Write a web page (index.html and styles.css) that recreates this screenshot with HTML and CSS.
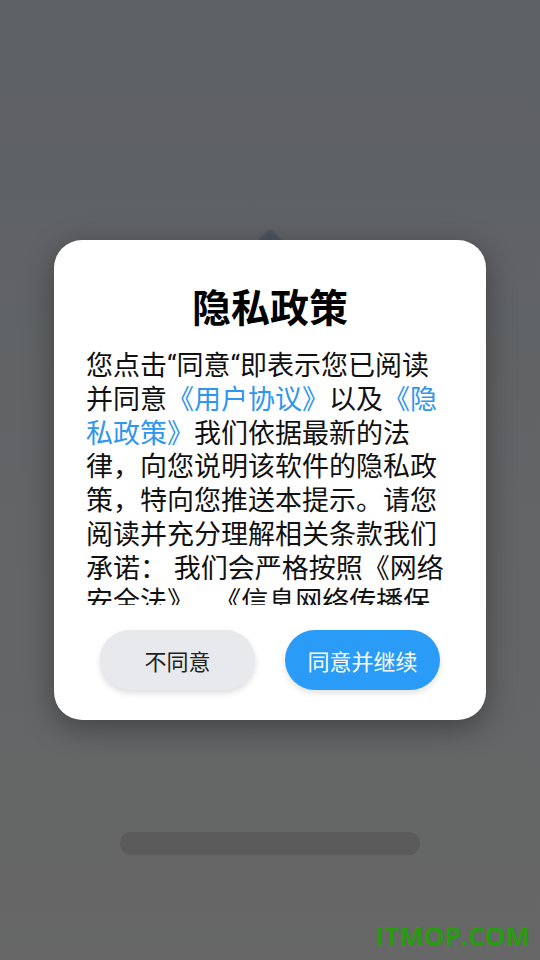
FILE: index.html
```html
<!DOCTYPE html>
<html lang="zh-CN">
<head>
<meta charset="utf-8">
<title>隐私政策</title>
<link rel="stylesheet" href="styles.css">
</head>
<body>
<div class="screen">
  <div class="peak"></div>
  <div class="dialog">
    <h1 class="title">隐私政策</h1>
    <div class="scroll">
      <p class="body-text">您点击“同意“即表示您已阅读并同意<span class="link">《用户协议》</span>以及<span class="link">《隐私政策》</span>我们依据最新的法律，向您说明该软件的隐私政策，特向您推送本提示。请您阅读并充分理解相关条款我们承诺： 我们会严格按照《网络安全法》、 《信息网络传播保护条例》等法律法规的要求，保护您的个人信息安全。</p>
    </div>
    <div class="actions">
      <button class="btn btn-decline">不同意</button>
      <button class="btn btn-accept">同意并继续</button>
    </div>
  </div>
  <div class="home-bar"></div>
  <div class="watermark">ITMOP.COM</div>
</div>
</body>
</html>
```
FILE: styles.css
```css
* { box-sizing: border-box; }
html, body { margin: 0; padding: 0; }
body {
  width: 540px;
  height: 960px;
  overflow: hidden;
  font-family: Roboto, "Noto Sans CJK SC", sans-serif;
}
.screen {
  position: relative;
  width: 540px;
  height: 960px;
  padding-top: 240px;
  background: linear-gradient(180deg, #5e6165 0%, #626466 50%, #676767 100%);
  display: flex;
  flex-direction: column;
  align-items: center;
}
.peak {
  position: absolute;
  left: 261px;
  top: 232px;
  width: 18px;
  height: 18px;
  background: #4c5260;
  transform: rotate(45deg);
  filter: blur(1.5px);
  border-radius: 3px;
}
.dialog {
  position: relative;
  width: 432px;
  height: 480px;
  background: #ffffff;
  border-radius: 28px;
  padding: 40px 32px 30px;
  box-shadow: 0 8px 30px rgba(0, 0, 0, 0.35);
  display: flex;
  flex-direction: column;
}
.title {
  margin: 0;
  font-family: "Noto Sans CJK SC", sans-serif;
  font-size: 39px;
  font-weight: 700;
  line-height: 50px;
  text-align: center;
  color: #000;
}
.scroll {
  margin-top: 20px;
  height: 255px;
  overflow: hidden;
}
.body-text {
  margin: 0;
  font-size: 27px;
  line-height: 33.75px;
  color: #111;
}
.link { color: #2f96ee; }
.actions {
  margin-top: 25px;
  display: flex;
  justify-content: center;
  gap: 30px;
}
.btn {
  width: 155px;
  height: 60px;
  border: none;
  border-radius: 30px;
  font-family: Roboto, "Noto Sans CJK SC", sans-serif;
  font-size: 22px;
  padding: 0;
}
.btn-decline {
  background: #e8e9ec;
  color: #222;
  box-shadow: 0 3px 6px rgba(0, 0, 0, 0.14);
}
.btn-accept {
  background: #2a9bf6;
  color: #fff;
  box-shadow: 0 3px 6px rgba(0, 0, 0, 0.12);
}
.home-bar {
  margin-top: 112px;
  width: 300px;
  height: 23px;
  border-radius: 12px;
  background: #5b5b5b;
}
.watermark {
  position: absolute;
  right: 10px;
  top: 923px;
  font-family: "Open Sans", sans-serif;
  font-weight: 700;
  font-size: 26px;
  line-height: 1;
  color: #2a9a12;
}
```
